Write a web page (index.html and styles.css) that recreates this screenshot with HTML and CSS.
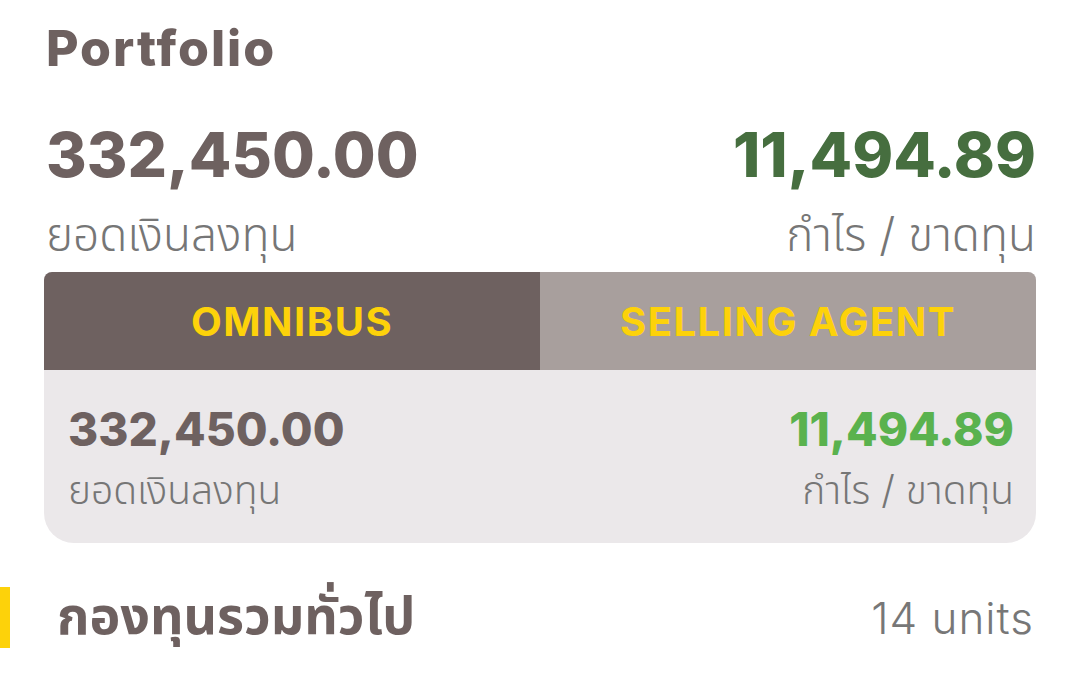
FILE: index.html
```html
<!DOCTYPE html>
<html lang="th">
<head>
<meta charset="utf-8">
<title>Portfolio</title>
<link rel="stylesheet" href="styles.css">
</head>
<body>
<main class="page">
  <h1 class="title">Portfolio</h1>
  <section class="summary">
    <div class="col">
      <div class="big-num">332,450.00</div>
      <div class="label">ยอดเงินลงทุน</div>
    </div>
    <div class="col right">
      <div class="big-num profit">11,494.89</div>
      <div class="label">กำไร / ขาดทุน</div>
    </div>
  </section>
  <section class="card">
    <div class="tabs">
      <div class="tab active">OMNIBUS</div>
      <div class="tab">SELLING AGENT</div>
    </div>
    <div class="card-body">
      <div class="col">
        <div class="mid-num">332,450.00</div>
        <div class="small-label">ยอดเงินลงทุน</div>
      </div>
      <div class="col right">
        <div class="mid-num profit-light">11,494.89</div>
        <div class="small-label">กำไร / ขาดทุน</div>
      </div>
    </div>
  </section>
  <section class="section-head">
    <div class="accent"></div>
    <h2 class="section-title">กองทุนรวมทั่วไป</h2>
    <div class="units">14 units</div>
  </section>
</main>
</body>
</html>
```
FILE: styles.css
```css
* { box-sizing: border-box; }
html, body { margin: 0; padding: 0; background: #ffffff; }
body {
  font-family: "Inter", "Noto Sans", "Noto Sans Thai", "Loma", sans-serif;
  color: #6e6160;
}
.page {
  padding: 18px 43px 0 44px;
}
.title {
  margin: 0;
  font-size: 50px;
  font-weight: 800;
  line-height: 60px;
  letter-spacing: 2px;
  padding-left: 2px;
  color: #6e6160;
}
.summary {
  display: flex;
  justify-content: space-between;
  margin-top: 42px;
  padding: 0 0 0 2px;
}
.col { display: flex; flex-direction: column; }
.col.right { align-items: flex-end; }
.big-num {
  font-size: 62px;
  font-weight: 800;
  line-height: 70px;
  color: #6e6160;
}
.big-num.profit { color: #466e3f; }
.label {
  margin-top: 13px;
  font-size: 46px;
  font-weight: 300;
  color: #767676;
  line-height: 62px;
}
.card {
  margin-top: 7px;
  background: #ebe8ea;
  border-radius: 8px 8px 30px 30px;
  overflow: hidden;
}
.tabs {
  display: flex;
  height: 98px;
}
.tab {
  flex: 1;
  display: flex;
  align-items: center;
  justify-content: center;
  background: #a89f9d;
  color: #fdd20a;
  font-size: 40px;
  font-weight: 700;
  letter-spacing: 1.5px;
}
.tab.active { background: #6e6160; }
.card-body {
  display: flex;
  justify-content: space-between;
  padding: 31px 22px 27px 24px;
}
.mid-num {
  font-size: 46px;
  font-weight: 800;
  line-height: 56px;
  color: #6e6160;
}
.mid-num.profit-light { color: #5ab24e; }
.small-label {
  margin-top: 7px;
  font-size: 39px;
  font-weight: 300;
  color: #767676;
  line-height: 52px;
}
.section-head {
  display: flex;
  align-items: center;
  margin: 44px -43px 0 -44px;
  padding-right: 45px;
  height: 61px;
}
.accent {
  width: 10px;
  height: 61px;
  background: #fdd20a;
}
.section-title {
  margin: 0 0 0 47px;
  font-size: 52px;
  font-weight: 700;
  color: #6e6160;
  flex: 1;
}
.units {
  font-size: 44px;
  font-weight: 300;
  color: #777777;
  letter-spacing: 1px;
}
```
